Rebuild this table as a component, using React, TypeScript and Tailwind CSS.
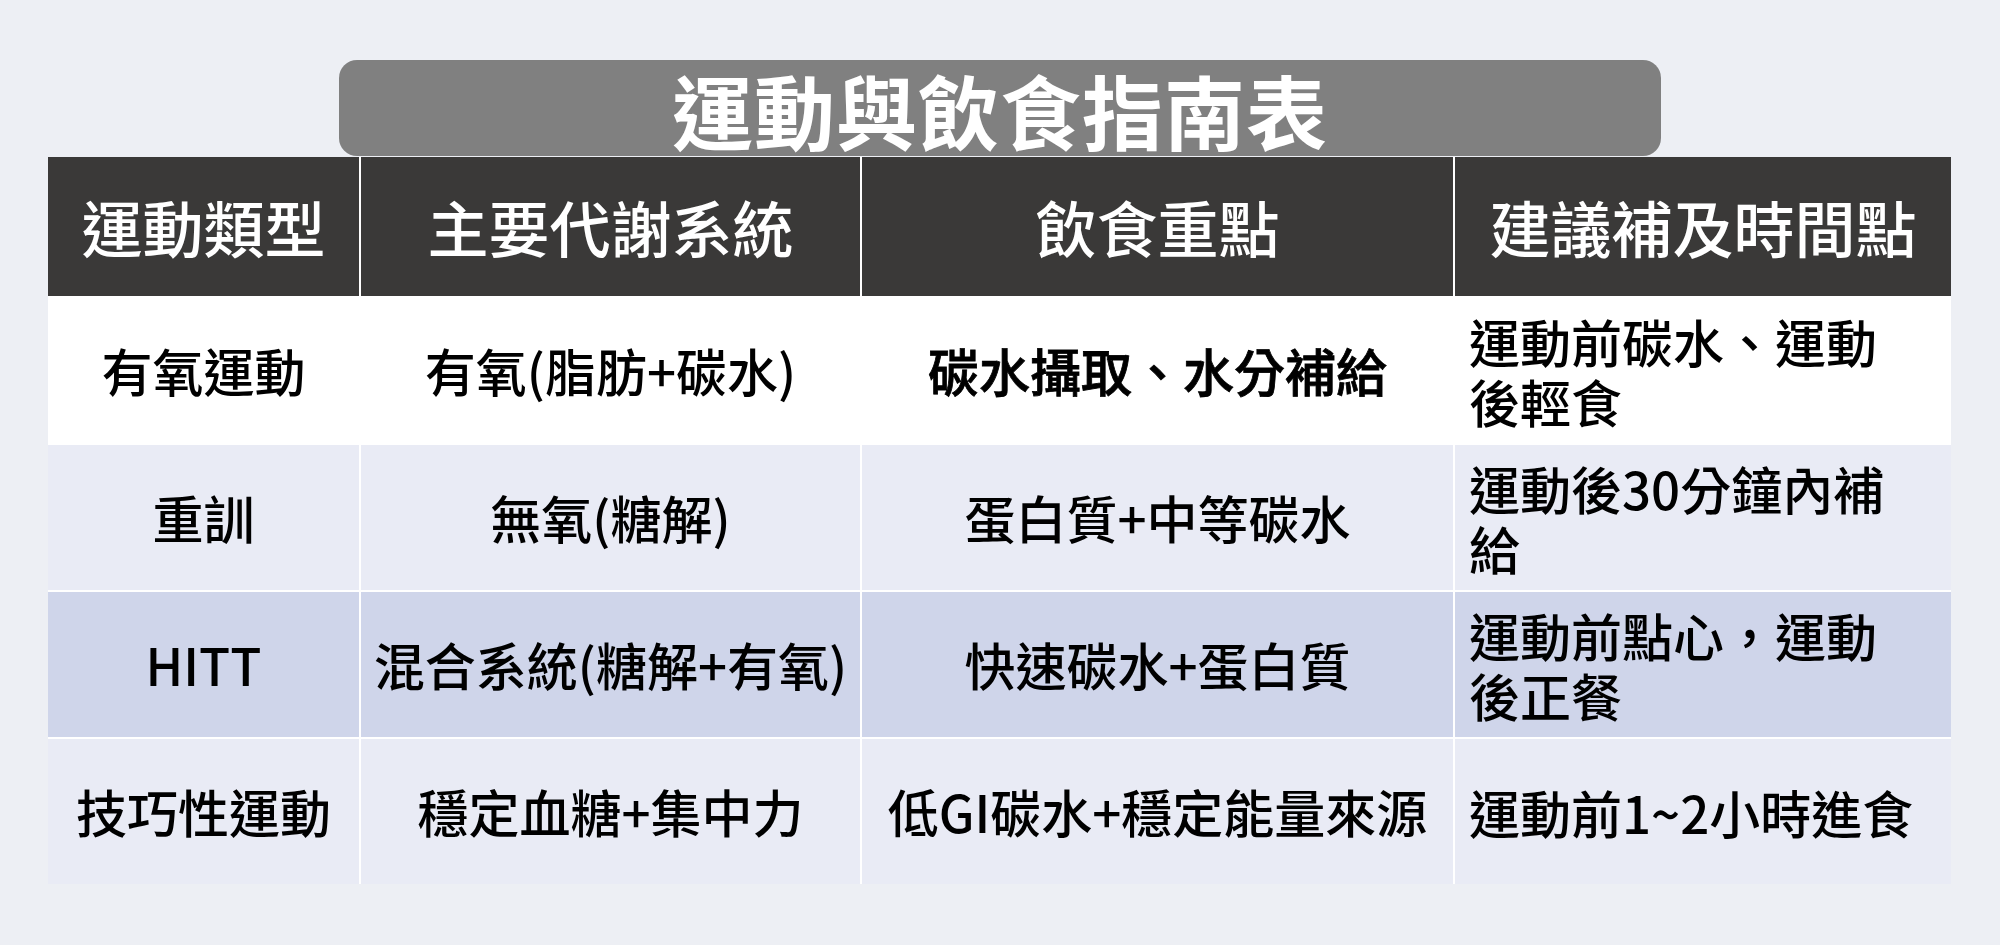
import React from "react";

type Row = {
  kind: string;
  system: string;
  diet: string;
  timing: string[];
  bg: string;
  bold?: boolean;
};

const rows: Row[] = [
  {
    kind: "有氧運動",
    system: "有氧(脂肪+碳水)",
    diet: "碳水攝取、水分補給",
    timing: ["運動前碳水、運動", "後輕食"],
    bg: "bg-white",
    bold: true,
  },
  {
    kind: "重訓",
    system: "無氧(糖解)",
    diet: "蛋白質+中等碳水",
    timing: ["運動後30分鐘內補", "給"],
    bg: "bg-[#e9ebf5]",
  },
  {
    kind: "HITT",
    system: "混合系統(糖解+有氧)",
    diet: "快速碳水+蛋白質",
    timing: ["運動前點心，運動", "後正餐"],
    bg: "bg-[#cfd5ea]",
  },
  {
    kind: "技巧性運動",
    system: "穩定血糖+集中力",
    diet: "低GI碳水+穩定能量來源",
    timing: ["運動前1~2小時進食"],
    bg: "bg-[#e9ebf5]",
  },
];

const heads = ["運動類型", "主要代謝系統", "飲食重點", "建議補及時間點"];

const font = { fontFamily: '"Noto Sans CJK TC", "Noto Sans", sans-serif' };

export default function App() {
  return (
    <div className="w-[2000px] h-[945px] bg-[#edeff4] pt-[60px] overflow-hidden" style={font}>
      <div className="ml-[339px] w-[1322px] h-[96px] rounded-[18px] bg-[#808080] flex items-center justify-center">
        <h1 className="text-white text-[81px] leading-none font-bold tracking-[1px]">運動與飲食指南表</h1>
      </div>

      <div className="ml-[48px] mt-px w-[1903px] grid grid-cols-[311px_499px_591px_496px] gap-[2px] bg-white">
        {heads.map((h) => (
          <div
            key={h}
            className="h-[139px] bg-[#3a3938] flex items-center justify-center text-white text-[61px] font-medium leading-none"
          >
            {h}
          </div>
        ))}

        {rows.map((r) => (
          <React.Fragment key={r.kind}>
            <div className={`h-[145px] ${r.bg} flex items-center justify-center text-black text-[51px] font-medium leading-none`}>
              {r.kind}
            </div>
            <div className={`h-[145px] ${r.bg} flex items-center justify-center text-black text-[51px] font-medium leading-none`}>
              {r.system}
            </div>
            <div
              className={`h-[145px] ${r.bg} flex items-center justify-center text-black text-[51px] font-medium leading-none ${
                r.bold ? "[-webkit-text-stroke:0.8px_black]" : ""
              }`}
            >
              {r.diet}
            </div>
            <div className={`h-[145px] ${r.bg} flex flex-col justify-center pl-[14px] text-black text-[51px] font-medium`}>
              {r.timing.map((t) => (
                <div key={t} className="h-[60px] leading-[60px] whitespace-nowrap">
                  {t}
                </div>
              ))}
            </div>
          </React.Fragment>
        ))}
      </div>
    </div>
  );
}
